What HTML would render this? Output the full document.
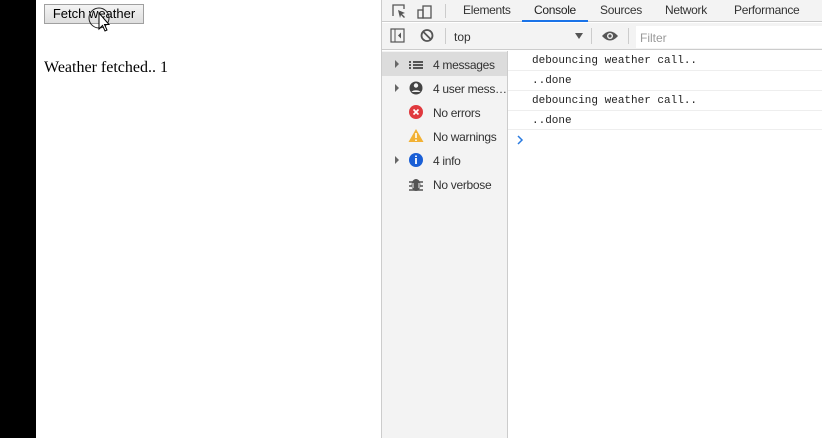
<!DOCTYPE html>
<html><head><style>
*{margin:0;padding:0;box-sizing:border-box}
body{width:822px;height:438px;position:relative;overflow:hidden;background:#fff;font-family:"Liberation Sans",sans-serif}
.abs{position:absolute}
.ui{font-size:12px;color:#333}
.sb{letter-spacing:-0.3px}
.mono{font-family:"Liberation Mono",monospace;font-size:11px;color:#222}
</style></head><body>
<div class="abs" style="left:0;top:0;width:36px;height:438px;background:#000"></div>
<div class="abs" style="left:44px;top:4px;width:100px;height:20px;border:1px solid #a0a0a0;background:linear-gradient(#f4f4f4,#dedede);font-size:13px;text-align:center;line-height:18px;color:#000">Fetch weather</div>
<svg class="abs" style="left:86px;top:4px" width="30" height="34"><circle cx="13" cy="14" r="10" fill="none" stroke="#222" stroke-width="1"/><path d="M13 9 L13 25 L16.5 21.5 L19 27 L21 26 L18.5 20.5 L23 20.5 Z" fill="#fff" stroke="#000" stroke-width="1"/></svg>
<div class="abs" style="left:44px;top:59px;font-family:'Liberation Serif',serif;font-size:16px;color:#000">Weather fetched.. 1</div>

<div class="abs" style="left:381px;top:0;width:441px;height:438px;background:#fff;border-left:1px solid #ccc"></div>
<div class="abs" style="left:382px;top:0;width:440px;height:22px;background:#f3f3f3;border-bottom:1px solid #ccc"></div>
<svg class="abs" style="left:390px;top:2px" width="50" height="18"><path d="M3 14V3h11v4" fill="none" stroke="#555" stroke-width="1.3"/><path d="M8 8l7 3-3 1 3 3-1 1-3-3-1 3z" fill="#555"/><rect x="33" y="4" width="8" height="12" fill="none" stroke="#555" stroke-width="1.3"/><rect x="28" y="8" width="5" height="8" fill="none" stroke="#555" stroke-width="1.3"/></svg>
<div class="abs" style="left:445px;top:4px;width:1px;height:14px;background:#ccc"></div>
<div class="abs ui sb" style="left:463px;top:3px">Elements</div>
<div class="abs ui sb" style="left:534px;top:3px;color:#222">Console</div>
<div class="abs" style="left:522px;top:20px;width:66px;height:2px;background:#1a73e8"></div>
<div class="abs ui sb" style="left:600px;top:3px">Sources</div>
<div class="abs ui sb" style="left:665px;top:3px">Network</div>
<div class="abs ui sb" style="left:734px;top:3px">Performance</div>

<div class="abs" style="left:382px;top:23px;width:440px;height:27px;background:#f3f3f3;border-bottom:1px solid #ccc"></div>
<svg class="abs" style="left:390px;top:28px" width="50" height="16"><rect x="1" y="1" width="13" height="13" fill="none" stroke="#555" stroke-width="1.2"/><path d="M5 1v13" stroke="#555"/><path d="M11 4.5v6l-3-3z" fill="#555"/><circle cx="37" cy="7.5" r="5.5" fill="none" stroke="#555" stroke-width="1.8"/><path d="M33 3.5l8 8" stroke="#555" stroke-width="1.8"/></svg>
<div class="abs" style="left:445px;top:28px;width:1px;height:16px;background:#ccc"></div>
<div class="abs ui" style="left:454px;top:30px">top</div>
<div class="abs" style="left:575px;top:33px;border-left:4px solid transparent;border-right:4px solid transparent;border-top:6px solid #555"></div>
<div class="abs" style="left:591px;top:28px;width:1px;height:16px;background:#ccc"></div>
<svg class="abs" style="left:601px;top:29px" width="18" height="14"><path d="M1 7Q9-2 17 7Q9 16 1 7z" fill="#555"/><circle cx="9" cy="7" r="3" fill="#f3f3f3"/><circle cx="9" cy="7" r="1.6" fill="#555"/></svg>
<div class="abs" style="left:628px;top:28px;width:1px;height:16px;background:#ccc"></div>
<div class="abs" style="left:636px;top:26px;width:186px;height:22px;background:#fff"></div>
<div class="abs ui" style="left:640px;top:31px;color:#999">Filter</div>

<div class="abs" style="left:382px;top:51px;width:126px;height:387px;background:#f3f3f3;border-right:1px solid #ccc"></div>
<div class="abs" style="left:382px;top:52px;width:125px;height:24px;background:#dcdcdc"></div>
<svg class="abs" style="left:390px;top:52px" width="40" height="145">
<path d="M5 8l4 4-4 4z" fill="#666"/><g fill="#555"><rect x="19" y="9" width="2" height="2"/><rect x="23" y="9" width="10" height="2"/><rect x="19" y="12" width="2" height="2"/><rect x="23" y="12" width="10" height="2"/><rect x="19" y="15" width="2" height="2"/><rect x="23" y="15" width="10" height="2"/></g>
<path d="M5 32l4 4-4 4z" fill="#666"/><circle cx="26" cy="36" r="6.5" fill="#444"/><circle cx="26" cy="33.5" r="2.2" fill="#f3f3f3"/><path d="M21.5 40a5 3 0 0 1 9 0" fill="#f3f3f3"/>
<circle cx="26" cy="60" r="7" fill="#e0393e"/><path d="M23.5 57.5l5 5M28.5 57.5l-5 5" stroke="#fff" stroke-width="1.6"/>
<path d="M26 77l7.5 13h-15z" fill="#f2b134"/><path d="M26 81v5M26 87.5v1.5" stroke="#fff" stroke-width="1.6"/>
<path d="M5 104l4 4-4 4z" fill="#666"/><circle cx="26" cy="108" r="7" fill="#1a5fd6"/><path d="M26 106v6M26 103.5v1.5" stroke="#fff" stroke-width="1.8"/>
<ellipse cx="26" cy="133" rx="4.5" ry="6" fill="#555"/><path d="M19 130h14M19 134h14M19 138h14" stroke="#555" stroke-width="1.4"/><path d="M23 131v5M29 131v5" stroke="#f3f3f3"/>
</svg>
<div class="abs ui sb" style="left:433px;top:58px">4 messages</div>
<div class="abs ui sb" style="left:433px;top:82px">4 user mess…</div>
<div class="abs ui sb" style="left:433px;top:106px">No errors</div>
<div class="abs ui sb" style="left:433px;top:130px">No warnings</div>
<div class="abs ui sb" style="left:433px;top:154px">4 info</div>
<div class="abs ui sb" style="left:433px;top:178px">No verbose</div>

<div class="abs mono" style="left:532px;top:55px">debouncing weather call..</div>
<div class="abs" style="left:508px;top:70px;width:314px;height:1px;background:#eee"></div>
<div class="abs mono" style="left:532px;top:75px">..done</div>
<div class="abs" style="left:508px;top:90px;width:314px;height:1px;background:#eee"></div>
<div class="abs mono" style="left:532px;top:95px">debouncing weather call..</div>
<div class="abs" style="left:508px;top:110px;width:314px;height:1px;background:#eee"></div>
<div class="abs mono" style="left:532px;top:115px">..done</div>
<div class="abs" style="left:508px;top:129px;width:314px;height:1px;background:#eee"></div>
<svg class="abs" style="left:516px;top:135px" width="8" height="10"><path d="M2 1l4 4-4 4" fill="none" stroke="#2a7be0" stroke-width="1.5"/></svg>
</body></html>
